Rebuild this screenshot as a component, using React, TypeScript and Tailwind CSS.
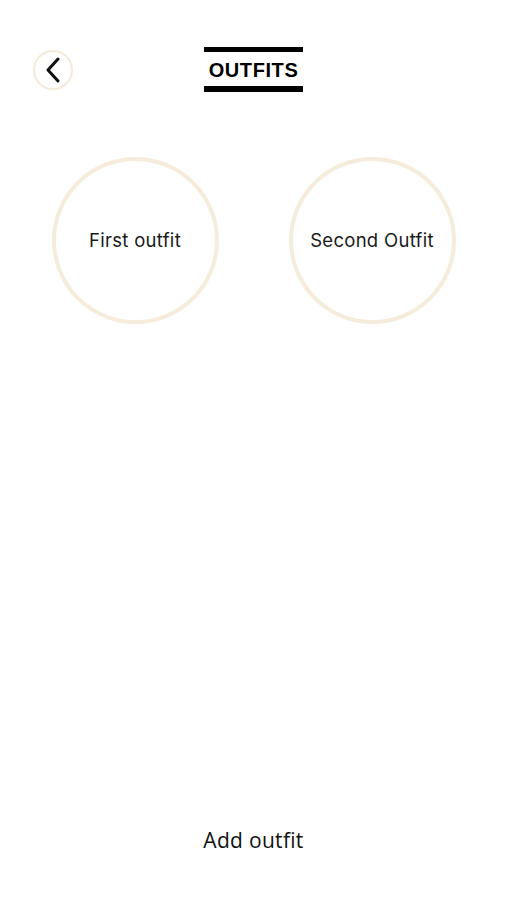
export default function App() {
    const outfits = ["First outfit", "Second Outfit"];

    return (
        <div className="w-[507px] h-[900px] bg-white flex flex-col font-['Open_Sans',sans-serif] text-[#1a1a1a]">
            {/* Header */}
            <div className="relative flex justify-center pt-[47px]">
                <button className="absolute left-[33px] top-[50px] w-[40px] h-[40px] rounded-full border-2 border-[#f5ead8] flex items-center justify-center">
                    <svg width="18" height="26" viewBox="0 0 18 26" fill="none">
                        <path d="M14 2 L4 13 L14 24" stroke="#111" strokeWidth="3" strokeLinecap="round" strokeLinejoin="round" />
                    </svg>
                </button>
                <div className="flex flex-col items-center w-[99px]">
                    <div className="w-full h-[5px] bg-black" />
                    <h1 className="font-['Liberation_Sans',sans-serif] font-bold text-[20px] leading-[32px] tracking-[0.6px] pt-[2px] text-black">OUTFITS</h1>
                    <div className="w-full h-[6px] bg-black" />
                </div>
            </div>

            {/* Outfits */}
            <div className="flex justify-center gap-[70px] mt-[65px]">
                {outfits.map((name) => (
                    <div
                        key={name}
                        className="w-[167px] h-[167px] rounded-full border-4 border-[#f6ecdc] flex items-center justify-center"
                    >
                        <span className="font-['Inter',sans-serif] text-[18.5px] tracking-[0.3px]">{name}</span>
                    </div>
                ))}
            </div>

            {/* Footer */}
            <div className="mt-auto flex justify-center pb-[44px]">
                <button className="text-[21px] tracking-[0.3px] text-[#111]">Add outfit</button>
            </div>
        </div>
    );
}
